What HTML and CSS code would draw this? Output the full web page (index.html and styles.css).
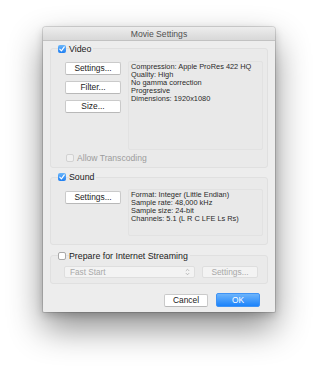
FILE: index.html
```html
<!DOCTYPE html>
<html>
<head>
<meta charset="utf-8">
<link rel="stylesheet" href="styles.css">
</head>
<body>
<div class="window">
  <div class="titlebar">Movie Settings</div>
  <div class="content">
    <div class="group-head video-head">
      <span class="check on"><svg viewBox="0 0 8 8" width="8" height="8"><path d="M1.8 4.2 L3.4 5.8 L6.3 1.9" fill="none" stroke="#fff" stroke-width="1.2" stroke-linecap="round" stroke-linejoin="round"/></svg></span>
      <span class="head-label">Video</span>
    </div>
    <div class="group video-group">
      <div class="row">
        <div class="btn-col">
          <div class="btn">Settings...</div>
          <div class="btn">Filter...</div>
          <div class="btn">Size...</div>
        </div>
        <div class="info video-info">
          <div>Compression: Apple ProRes 422 HQ</div>
          <div>Quality: High</div>
          <div>No gamma correction</div>
          <div>Progressive</div>
          <div>Dimensions: 1920x1080</div>
        </div>
      </div>
      <div class="sub-check">
        <span class="check off disabled"></span>
        <span class="sub-label">Allow Transcoding</span>
      </div>
    </div>

    <div class="group-head sound-head">
      <span class="check on"><svg viewBox="0 0 8 8" width="8" height="8"><path d="M1.8 4.2 L3.4 5.8 L6.3 1.9" fill="none" stroke="#fff" stroke-width="1.2" stroke-linecap="round" stroke-linejoin="round"/></svg></span>
      <span class="head-label">Sound</span>
    </div>
    <div class="group sound-group">
      <div class="row">
        <div class="btn-col sound-col">
          <div class="btn">Settings...</div>
        </div>
        <div class="info sound-info">
          <div>Format: Integer (Little Endian)</div>
          <div>Sample rate: 48,000 kHz</div>
          <div>Sample size: 24-bit</div>
          <div>Channels: 5.1 (L R C LFE Ls Rs)</div>
        </div>
      </div>
    </div>

    <div class="group-head stream-head">
      <span class="check off"></span>
      <span class="head-label">Prepare for Internet Streaming</span>
    </div>
    <div class="group stream-group">
      <div class="popup">
        <span>Fast Start</span>
        <svg viewBox="0 0 6 9" width="5" height="8"><path d="M1 3.2 L3 1.2 L5 3.2 M1 5.8 L3 7.8 L5 5.8" fill="none" stroke="#a8a8a8" stroke-width="0.9"/></svg>
      </div>
      <div class="btn disabled-btn">Settings...</div>
    </div>

    <div class="footer">
      <div class="btn cancel">Cancel</div>
      <div class="btn ok">OK</div>
    </div>
  </div>
</div>
</body>
</html>
```

FILE: styles.css
```css
* { box-sizing: border-box; }
html, body { margin: 0; padding: 0; background: #ffffff; }
body {
  font-family: "Liberation Sans", Arial, sans-serif;
  color: #1e1e1e;
  width: 318px;
  height: 371px;
  overflow: hidden;
}
.window {
  margin: 27px 0 0 43px;
  width: 232px;
  height: 285px;
  background: #ededed;
  border-radius: 3px 3px 1px 1px;
  box-shadow: 0 16px 34px rgba(0,0,0,0.45), 0 0 0 1px rgba(0,0,0,0.13), 0 3px 8px rgba(0,0,0,0.18);
  display: flex;
  flex-direction: column;
}
.titlebar {
  height: 14px;
  flex: none;
  background: linear-gradient(#ededed, #d8d8d8);
  border-bottom: 1px solid #c2c2c2;
  border-radius: 3px 3px 0 0;
  text-align: center;
  font-size: 8.6px;
  line-height: 14px;
  color: #505050;
}
.content {
  padding: 0 7px 6px 7px;
  display: flex;
  flex-direction: column;
}
.group-head {
  height: 8px;
  display: flex;
  align-items: center;
  padding-left: 8px;
  position: relative;
  z-index: 1;
}
.head-label {
  font-size: 8.8px;
  line-height: 8px;
  margin-left: 3px;
  padding-right: 2px;
  color: #1a1a1a;
  background: #ececec;
}
.video-head { margin-top: 4px; }
.sound-head { margin-top: 5px; }
.stream-head { margin-top: 7px; }
.check {
  width: 8px;
  height: 8px;
  border-radius: 2px;
  flex: none;
  display: inline-block;
}
.check svg { display: block; }
.check.on {
  background: linear-gradient(#6bb6fa, #1f7ff2);
  border: none;
}
.check.off {
  background: #fff;
  border: 1px solid #a9a9a9;
}
.check.disabled {
  background: #f0f0f0;
  border: 1px solid #d2d2d2;
}
.group {
  border: 1px solid #e0e0e0;
  border-radius: 3px;
  background: #eaeaea;
}
.video-group {
  margin-top: -5px;
  height: 120px;
  padding: 12px 4px 5px 14px;
}
.sound-group {
  margin-top: -4px;
  height: 68px;
  padding: 11px 4px 8px 14px;
}
.stream-group {
  margin-top: -5px;
  height: 29px;
  padding: 10px 9px 5px 13px;
  display: flex;
  gap: 7px;
}
.row {
  display: flex;
  gap: 7px;
}
.btn-col {
  display: flex;
  flex-direction: column;
  gap: 6px;
  margin-top: 1px;
}
.sound-col { margin-top: 2px; }
.btn {
  width: 56px;
  height: 13px;
  background: #fff;
  border: 1px solid #cacaca;
  border-bottom-color: #b8b8b8;
  border-radius: 2px;
  font-size: 8.4px;
  line-height: 11px;
  text-align: center;
  color: #222;
}
.info {
  width: 135px;
  border: 1px solid #e2e2e2;
  border-radius: 2px;
  background: #e9e9e9;
  padding: 1px 0 0 2px;
  font-size: 7.4px;
  line-height: 8px;
  color: #2a2a2a;
}
.video-info { height: 89px; }
.sound-info { height: 47px; }
.sub-check {
  margin-top: 4px;
  margin-left: 1px;
  height: 8px;
  display: flex;
  align-items: center;
}
.sub-label {
  font-size: 8.6px;
  margin-left: 3px;
  color: #9c9c9c;
}
.popup {
  width: 131px;
  height: 12px;
  background: #f3f3f3;
  border: 1px solid #dedede;
  border-radius: 2px;
  display: flex;
  align-items: center;
  justify-content: space-between;
  padding: 0 4px 0 5px;
  font-size: 8.2px;
  color: #a8a8a8;
}
.popup svg { display: block; }
.disabled-btn {
  height: 12px;
  background: #f3f3f3;
  border: 1px solid #dedede;
  color: #a8a8a8;
  line-height: 10px;
}
.footer {
  margin-top: 9px;
  display: flex;
  justify-content: flex-end;
  align-items: flex-end;
  gap: 8px;
  padding-right: 8px;
}
.cancel {
  width: 44px;
  height: 13px;
}
.ok {
  width: 44px;
  height: 14px;
  border: 1px solid #3f93f5;
  background: linear-gradient(#6db4fb, #1b83fb);
  color: #fff;
  line-height: 12px;
}
```
